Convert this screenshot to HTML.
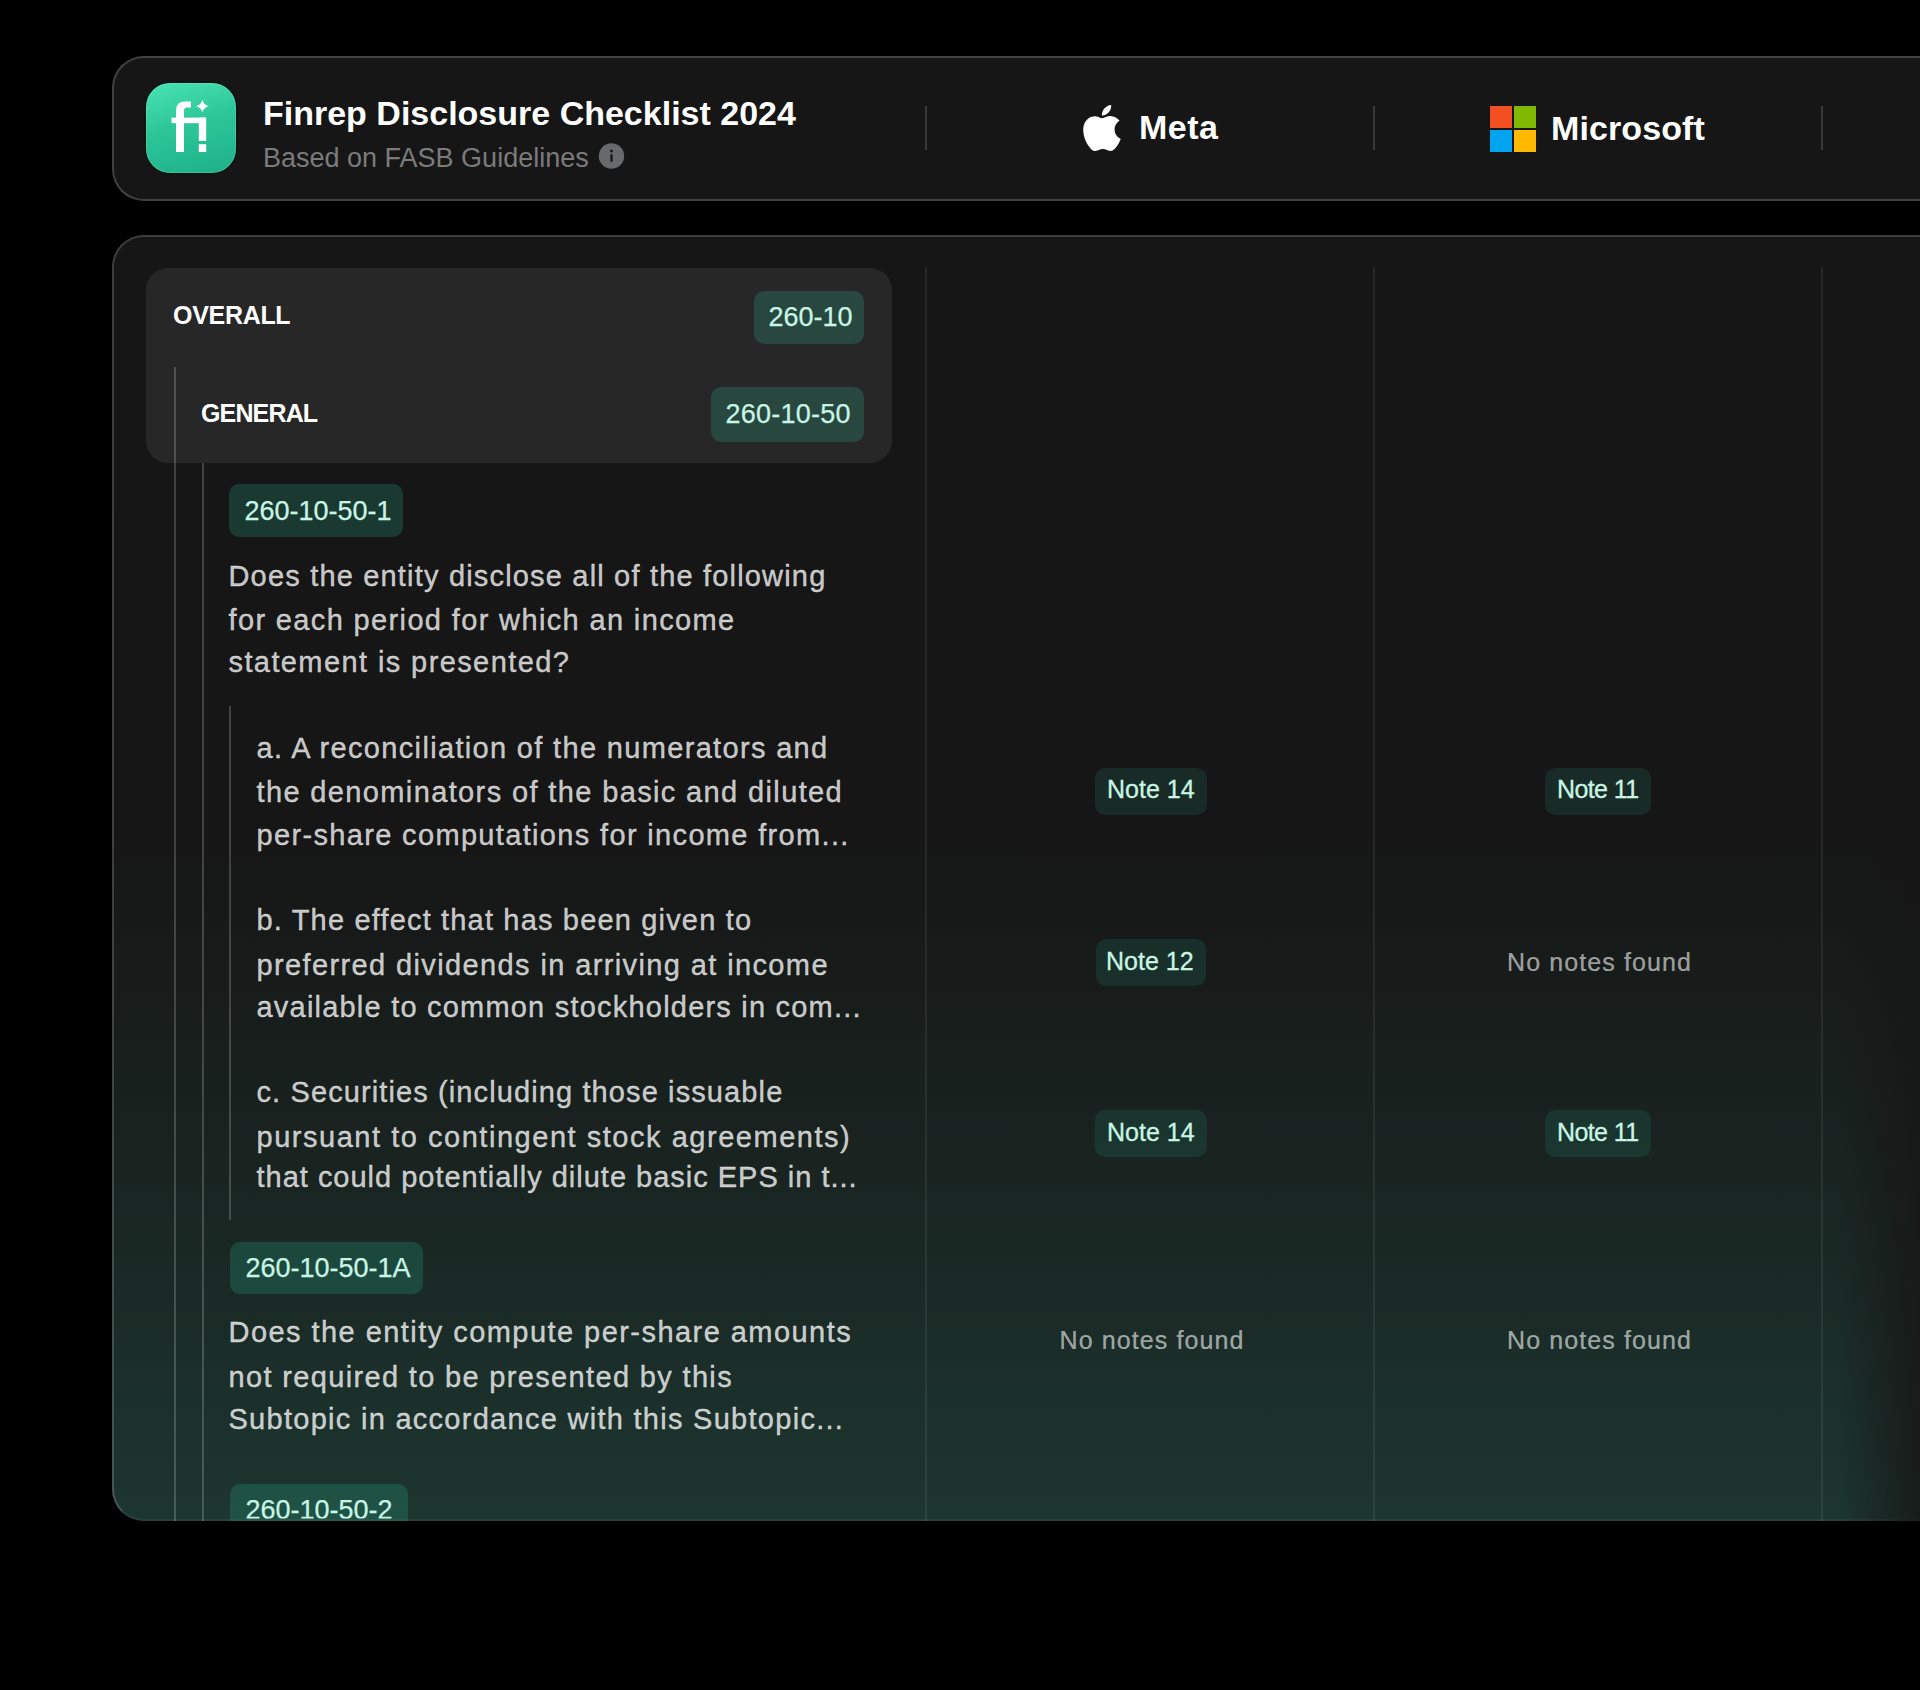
<!DOCTYPE html>
<html><head><meta charset="utf-8">
<style>
*{box-sizing:border-box;margin:0;padding:0}
html,body{width:1920px;height:1690px;overflow:hidden;background:#000}
body{position:relative;font-family:"Liberation Sans",sans-serif;}
.abs{position:absolute}
.hdr{left:112px;top:56px;width:1900px;height:145px;border:2px solid #414141;border-right:none;border-radius:32px 0 0 32px;background:#161616}
.panel{left:112px;top:235px;width:1900px;height:1286px;border-radius:32px 0 0 32px;overflow:hidden;background:#161616}
.t{position:absolute;white-space:nowrap;line-height:1}
.tag{position:absolute;border-radius:10px;background:rgba(40,200,160,0.2)}
.ntag{background:rgba(40,200,160,0.12)}
.tagt{color:#c9f5e5;font-size:27px;-webkit-text-stroke:0.25px #c9f5e5;transform:translate(-0.5px,-2.5px)}
.vl{position:absolute;width:2px;background:rgba(255,255,255,0.19)}
.cd{position:absolute;width:2px;background:rgba(255,255,255,0.075)}
.q{color:rgba(255,255,255,0.75);font-size:29px;letter-spacing:1.1px;-webkit-text-stroke:0.35px rgba(255,255,255,0.75);transform:translate(-1.5px,-3.5px)}
.note{color:#c9f5e5;font-size:25px;-webkit-text-stroke:0.3px #c9f5e5;transform:translate(-2px,-3px)}
.nn{color:rgba(255,255,255,0.58);-webkit-text-stroke:0.2px rgba(255,255,255,0.58);font-size:25px;letter-spacing:1.1px;transform:translate(-2px,-1px)}
</style></head>
<body>
<!-- header -->
<div class="abs hdr"></div>
<div class="abs" id="icon" style="left:146px;top:83px;width:90px;height:90px;border-radius:24px;background:linear-gradient(165deg,#48e3b3 0%,#2dc698 45%,#1fb08a 100%);box-shadow:0 0 0 1.5px #03140e, inset 0 0 0 1px rgba(255,255,255,0.12)">
<svg width="90" height="90" viewBox="0 0 90 90" style="position:absolute;left:0;top:0">
<path fill="#fff" d="M30,69 V28 Q30,18.6 39,18.6 H45 V24.6 H41 Q38,24.6 38,28 V69 Z"/>
<rect fill="#fff" x="25.5" y="34.6" width="34.5" height="5.6"/>
<rect fill="#fff" x="52.8" y="34.6" width="7.4" height="23.4"/>
<rect fill="#fff" x="52.8" y="61.2" width="7.4" height="7.8"/>
<path fill="#fff" d="M56.4,16.8 Q57.6,22 62.8,23.2 Q57.6,24.4 56.4,29.6 Q55.2,24.4 50,23.2 Q55.2,22 56.4,16.8 Z"/>
</svg></div>
<div class="t" id="title" style="left:263px;top:96px;font-size:34px;font-weight:700;color:#fff">Finrep Disclosure Checklist 2024</div>
<div class="t" id="sub" style="left:263px;top:145px;font-size:27px;color:#7b7b7b">Based on FASB Guidelines</div>
<svg class="abs" id="info" style="left:598px;top:143px" width="27" height="27" viewBox="0 0 27 27"><circle cx="13.5" cy="13" r="12.7" fill="#68696a"/><circle cx="13.5" cy="8" r="1.5" fill="#151515"/><rect x="12.35" y="11" width="2.3" height="8" rx="1" fill="#151515"/></svg>
<div class="cd" style="left:925px;top:106px;height:44px;background:#383838"></div>
<div class="cd" style="left:1373px;top:106px;height:44px;background:#383838"></div>
<div class="cd" style="left:1821px;top:106px;height:44px;background:#383838"></div>
<svg class="abs" id="apple" style="left:1078.5px;top:105px" width="46" height="46" viewBox="0 0 24 24"><path fill="#fff" d="M12.152 6.896c-.948 0-2.415-1.078-3.96-1.04-2.04.027-3.91 1.183-4.961 3.014-2.117 3.675-.546 9.103 1.519 12.09 1.013 1.454 2.208 3.09 3.792 3.039 1.52-.065 2.09-.987 3.935-.987 1.831 0 2.35.987 3.96.948 1.637-.026 2.676-1.48 3.676-2.948 1.156-1.688 1.636-3.325 1.662-3.415-.039-.013-3.182-1.221-3.22-4.857-.026-3.04 2.48-4.494 2.597-4.559-1.429-2.09-3.623-2.324-4.39-2.376-2-.156-3.675 1.09-4.61 1.09zM15.53 3.83c.843-1.012 1.4-2.427 1.245-3.83-1.207.052-2.662.805-3.532 1.818-.78.896-1.454 2.338-1.273 3.714 1.338.104 2.715-.688 3.559-1.701"/></svg>
<div class="t" id="meta" style="left:1139px;top:110px;font-size:34px;letter-spacing:0.5px;font-weight:700;color:#fff">Meta</div>
<div class="abs" id="ms" style="left:1490px;top:106px;width:46px;height:46px">
  <div class="abs" style="left:0;top:0;width:22px;height:22px;background:#f25022"></div>
  <div class="abs" style="left:24px;top:0;width:22px;height:22px;background:#7fba00"></div>
  <div class="abs" style="left:0;top:24px;width:22px;height:22px;background:#00a4ef"></div>
  <div class="abs" style="left:24px;top:24px;width:22px;height:22px;background:#ffb900"></div>
</div>
<div class="t" id="msft" style="left:1551px;top:111px;font-size:34px;letter-spacing:0.1px;font-weight:700;color:#fff">Microsoft</div>

<!-- main panel -->
<div class="abs panel" id="panel">
  <div class="abs" style="left:0;top:0;right:0;bottom:0;background:linear-gradient(180deg,rgba(29,54,47,0) 0%,rgba(29,54,47,0) 47%,rgba(29,54,47,0.4) 71%,rgba(29,54,47,1) 100%)"></div>
</div>
<div class="abs" style="left:112px;top:235px;width:1900px;height:1286px;border:2px solid rgba(255,255,255,0.17);border-bottom-color:rgba(255,255,255,0.05);border-right:none;border-radius:32px 0 0 32px"></div>

<div class="abs" style="left:146px;top:268px;width:746px;height:195px;border-radius:22px;background:#272727"></div>
<div class="t" id="overall" style="left:173px;top:303px;font-size:25px;letter-spacing:-0.3px;font-weight:700;color:#fff">OVERALL</div>
<div class="tag" style="left:754px;top:291px;width:110px;height:53px"></div>
<div class="t tagt" id="tg1" style="left:769px;top:306px">260-10</div>
<div class="vl" style="left:174px;top:367px;height:1154px"></div>
<div class="t" id="general" style="left:201px;top:401px;font-size:25px;letter-spacing:-0.85px;font-weight:700;color:#fff">GENERAL</div>
<div class="tag" style="left:711px;top:387px;width:153px;height:55px"></div>
<div class="t tagt" id="tg2" style="left:726px;top:403px;letter-spacing:0.25px">260-10-50</div>
<div class="vl" style="left:202px;top:463px;height:1058px"></div>

<div class="tag" style="left:229px;top:484px;width:174px;height:53px"></div>
<div class="t tagt" id="tg3" style="left:245px;top:500px">260-10-50-1</div>
<div class="t q" id="q1a" style="left:230px;top:565px;letter-spacing:1.18px">Does the entity disclose all of the following</div>
<div class="t q" style="left:230px;top:609px;letter-spacing:1.36px">for each period for which an income</div>
<div class="t q" style="left:230px;top:651px;letter-spacing:1.40px">statement is presented?</div>

<div class="vl" style="left:229px;top:706px;height:514px"></div>
<div class="t q" id="a1" style="left:258px;top:737px;letter-spacing:1.33px">a. A reconciliation of the numerators and</div>
<div class="t q" style="left:258px;top:781px;letter-spacing:1.37px">the denominators of the basic and diluted</div>
<div class="t q" style="left:258px;top:824px;letter-spacing:1.34px">per-share computations for income from...</div>
<div class="t q" style="left:258px;top:909px;letter-spacing:1.17px">b. The effect that has been given to</div>
<div class="t q" style="left:258px;top:954px;letter-spacing:1.38px">preferred dividends in arriving at income</div>
<div class="t q" style="left:258px;top:996px;letter-spacing:1.21px">available to common stockholders in com...</div>
<div class="t q" style="left:258px;top:1081px;letter-spacing:1.11px">c. Securities (including those issuable</div>
<div class="t q" style="left:258px;top:1126px;letter-spacing:1.53px">pursuant to contingent stock agreements)</div>
<div class="t q" style="left:258px;top:1166px;letter-spacing:0.99px">that could potentially dilute basic EPS in t...</div>

<div class="tag" style="left:230px;top:1242px;width:193px;height:52px"></div>
<div class="t tagt" id="tg4" style="left:246px;top:1257px">260-10-50-1A</div>
<div class="t q" style="left:230px;top:1321px;letter-spacing:1.45px">Does the entity compute per-share amounts</div>
<div class="t q" style="left:230px;top:1366px;letter-spacing:1.34px">not required to be presented by this</div>
<div class="t q" style="left:230px;top:1408px;letter-spacing:1.28px">Subtopic in accordance with this Subtopic...</div>

<div class="tag" style="left:230px;top:1484px;width:178px;height:37px;border-radius:10px 10px 0 0"></div>
<div class="t tagt" id="tg5" style="left:246px;top:1499px;height:22px;overflow:hidden">260-10-50-2</div>

<!-- column dividers -->
<div class="cd" style="left:925px;top:267px;height:1254px"></div>
<div class="cd" style="left:1373px;top:267px;height:1254px"></div>
<div class="cd" style="left:1821px;top:267px;height:1254px"></div>

<div class="abs" style="left:1838px;top:237px;width:82px;height:1284px;background:linear-gradient(90deg,rgba(22,22,22,0) 0%,rgba(22,22,22,0.8) 100%)"></div>
<!-- notes col1 -->
<div class="tag ntag" style="left:1095px;top:768px;width:112px;height:47px"></div>
<div class="t note" style="left:1109px;top:780px">Note 14</div>
<div class="tag ntag" style="left:1096px;top:939px;width:110px;height:47px"></div>
<div class="t note" style="left:1108px;top:952px">Note 12</div>
<div class="tag ntag" style="left:1095px;top:1110px;width:112px;height:47px"></div>
<div class="t note" style="left:1109px;top:1123px">Note 14</div>
<div class="t nn" style="left:1061.5px;top:1329px">No notes found</div>
<!-- notes col2 -->
<div class="tag ntag" style="left:1545px;top:768px;width:106px;height:47px"></div>
<div class="t note" style="left:1559px;top:780px;letter-spacing:-0.6px">Note 11</div>
<div class="t nn" style="left:1509px;top:951px">No notes found</div>
<div class="tag ntag" style="left:1545px;top:1110px;width:106px;height:47px"></div>
<div class="t note" style="left:1559px;top:1123px;letter-spacing:-0.6px">Note 11</div>
<div class="t nn" style="left:1509px;top:1329px">No notes found</div>
</body></html>
